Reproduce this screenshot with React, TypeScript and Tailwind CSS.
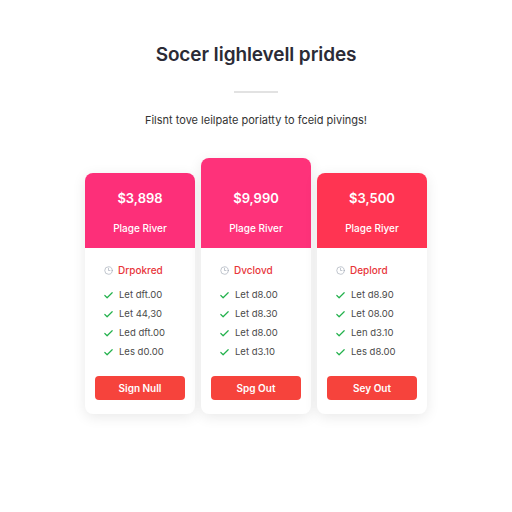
import { Check, Clock3 } from 'lucide-react';

type Plan = {
  price: string;
  name: string;
  tag: string;
  features: string[];
  cta: string;
  header: string;
  featured?: boolean;
};

const plans: Plan[] = [
  {
    price: '$3,898',
    name: 'Plage River',
    tag: 'Drpokred',
    features: ['Let dft.00', 'Let 44,30', 'Led dft.00', 'Les d0.00'],
    cta: 'Sign Null',
    header: 'bg-[#fd2f79]',
  },
  {
    price: '$9,990',
    name: 'Plage River',
    tag: 'Dvclovd',
    features: ['Let d8.00', 'Let d8.30', 'Let d8.00', 'Let d3.10'],
    cta: 'Spg Out',
    header: 'bg-[#fe327a]',
    featured: true,
  },
  {
    price: '$3,500',
    name: 'Plage Riyer',
    tag: 'Deplord',
    features: ['Let d8.90', 'Let 08.00', 'Len d3.10', 'Les d8.00'],
    cta: 'Sey Out',
    header: 'bg-[#ff3452]',
  },
];

function PlanCard({ plan }: { plan: Plan }) {
  return (
    <div className="w-[110px] rounded-lg bg-white overflow-hidden shadow-[0_3px_14px_rgba(0,0,0,0.09)]">
      <div
        className={`${plan.header} flex flex-col items-center text-white pb-[13px] ${
          plan.featured ? 'pt-[30px]' : 'pt-[15px]'
        }`}
      >
        <div className="text-[13px] leading-[20px] font-semibold">{plan.price}</div>
        <div className="mt-[13px] text-[10px] leading-[14px] font-medium">{plan.name}</div>
      </div>
      <div className="px-[10px] pt-[15px] pb-[14px]">
        <div className="flex items-center gap-[5px] pl-[9px] h-[14px]">
          <Clock3 size={9} strokeWidth={1.6} className="text-gray-400" />
          <span className="text-[10px] leading-[14px] font-medium text-[#e8353a]">{plan.tag}</span>
        </div>
        <div className="mt-[9px] flex flex-col">
          {plan.features.map((f) => (
            <div key={f} className="h-[19px] flex items-center gap-[5px] pl-[8px]">
              <Check size={11} strokeWidth={2.6} className="text-[#25b24e]" />
              <span className="text-[9.5px] text-[#4a4a4a]">{f}</span>
            </div>
          ))}
        </div>
        <button className="mt-[14px] w-full h-[24px] rounded-[4px] bg-[#f6433c] text-white text-[10px] font-semibold">
          {plan.cta}
        </button>
      </div>
    </div>
  );
}

export default function App() {
  return (
    <div className="w-[512px] h-[512px] bg-white flex flex-col items-center pt-[41px] font-['Inter',sans-serif]">
      <h1 className="text-[19px] leading-[28px] font-semibold text-[#2b2b36] tracking-[-0.1px]">
        Socer Iighlevell prides
      </h1>
      <div className="mt-[22px] w-[44px] h-[2px] bg-[#e2e2e2]" />
      <p className="mt-[19px] text-[11px] leading-[16px] text-[#333]">
        Filsnt tove leilpate poriatty to fceid pivings!
      </p>
      <div className="mt-[30px] flex items-end gap-[6px]">
        {plans.map((p) => (
          <PlanCard key={p.price} plan={p} />
        ))}
      </div>
    </div>
  );
}
